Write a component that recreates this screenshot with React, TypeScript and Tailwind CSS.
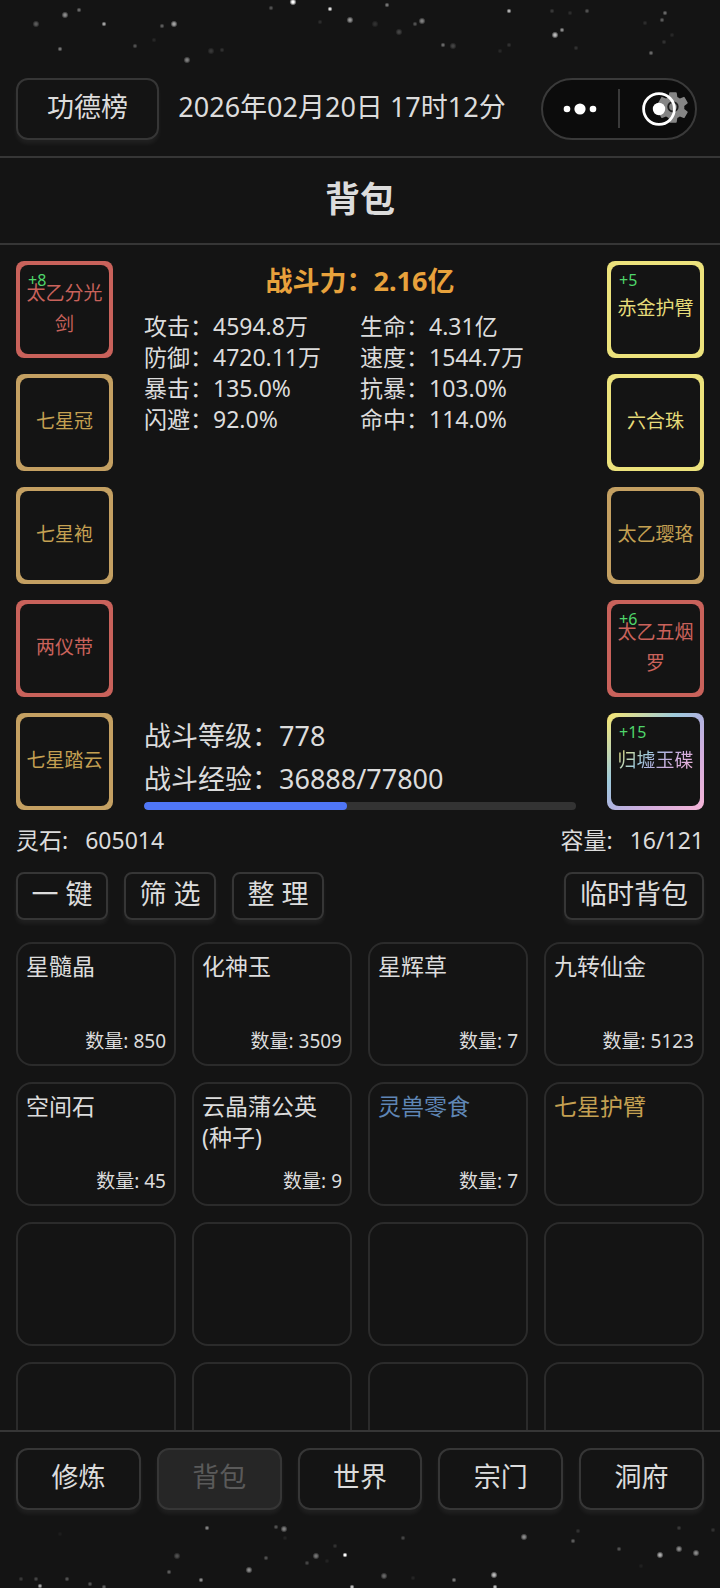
type Quality = 'gold' | 'red' | 'yellow' | 'rainbow'

type Equip = { name: string; quality: Quality; level?: number }

type Item = { name: string; count?: number; color?: string }

const frameClass: Record<Quality, string> = {
  gold: 'bg-[#c4a062]',
  red: 'bg-[#c9625b]',
  yellow: 'bg-[#ece27c]',
  rainbow: 'bg-[linear-gradient(135deg,#f8e670,#9fcbdc_36%,#b0b4e0_50%,#d3aede_70%,#f5b4d6)]'
}

const nameClass: Record<Quality, string> = {
  gold: 'text-[#c4a052]',
  red: 'text-[#c9625b]',
  yellow: 'text-[#e6dc7a]',
  rainbow:
    'bg-[linear-gradient(135deg,#f8e670,#9fcbdc_36%,#b0b4e0_50%,#d3aede_70%,#f5b4d6)] bg-clip-text text-transparent'
}

const leftEquips: Equip[] = [
  { name: '太乙分光剑', quality: 'red', level: 8 },
  { name: '七星冠', quality: 'gold' },
  { name: '七星袍', quality: 'gold' },
  { name: '两仪带', quality: 'red' },
  { name: '七星踏云', quality: 'gold' }
]

const rightEquips: Equip[] = [
  { name: '赤金护臂', quality: 'yellow', level: 5 },
  { name: '六合珠', quality: 'yellow' },
  { name: '太乙璎珞', quality: 'gold' },
  { name: '太乙五烟罗', quality: 'red', level: 6 },
  { name: '归墟玉碟', quality: 'rainbow', level: 15 }
]

const stats = [
  ['攻击', '4594.8万'],
  ['生命', '4.31亿'],
  ['防御', '4720.11万'],
  ['速度', '1544.7万'],
  ['暴击', '135.0%'],
  ['抗暴', '103.0%'],
  ['闪避', '92.0%'],
  ['命中', '114.0%']
]

const items: Item[] = [
  { name: '星髓晶', count: 850 },
  { name: '化神玉', count: 3509 },
  { name: '星辉草', count: 7 },
  { name: '九转仙金', count: 5123 },
  { name: '空间石', count: 45 },
  { name: '云晶蒲公英(种子)', count: 9 },
  { name: '灵兽零食', count: 7, color: 'text-[#5f86b5]' },
  { name: '七星护臂', color: 'text-[#c4a052]' }
]

const EMPTY_SLOTS = 12

const tabs = ['修炼', '背包', '世界', '宗门', '洞府']

const exp = { current: 36888, max: 77800 }

// x, y, radius, opacity
const topStars = [
  [36, 24, 3, 0.3], [65, 15, 3, 0.5], [79, 10, 2, 0.35], [60, 49, 2, 0.4], [104, 24, 2, 0.6],
  [135, 46, 2, 0.25], [154, 40, 2, 0.08], [162, 26, 2, 0.3], [174, 24, 3, 0.6], [187, 60, 3, 0.45],
  [211, 51, 3, 0.15], [222, 50, 2, 0.12], [271, 8, 2, 0.25], [293, 2, 3, 1], [330, 9, 2, 0.85],
  [320, 22, 2, 0.1], [350, 20, 3, 0.55], [375, 24, 3, 0.12], [387, 5, 2, 0.4], [399, 32, 3, 0.2],
  [415, 24, 2, 0.25], [422, 21, 3, 0.45], [443, 45, 2, 0.35], [453, 46, 3, 0.2], [509, 11, 2, 0.65],
  [509, 45, 2, 0.12], [500, 51, 2, 0.08], [552, 11, 2, 0.15], [555, 35, 3, 0.7], [562, 30, 2, 0.5],
  [570, 13, 2, 0.1], [587, 11, 2, 0.25], [576, 48, 2, 0.12], [645, 23, 2, 0.1], [651, 53, 2, 0.35],
  [662, 20, 2, 0.3], [665, 13, 2, 0.35], [664, 42, 2, 0.12], [672, 35, 2, 0.08]
]

const bottomStars = [
  [21, 69, 2, 0.15], [36, 69, 2, 0.2], [40, 76, 2, 0.6], [67, 69, 2, 0.25], [90, 74, 2, 0.25],
  [104, 77, 2, 0.3], [60, 24, 2, 0.04], [169, 62, 2, 0.3], [177, 46, 3, 0.25], [207, 18, 2, 0.45],
  [201, 70, 2, 0.5], [249, 60, 3, 0.5], [266, 48, 2, 0.25], [276, 17, 2, 0.25], [284, 19, 3, 0.45],
  [285, 28, 2, 0.06], [307, 53, 2, 0.2], [316, 46, 3, 0.4], [327, 51, 2, 0.06], [335, 36, 2, 0.12],
  [345, 45, 2, 1], [352, 77, 2, 0.7], [384, 66, 3, 0.35], [403, 28, 2, 0.2], [413, 68, 2, 0.07],
  [454, 70, 2, 0.4], [494, 65, 3, 0.7], [495, 77, 2, 0.7], [524, 27, 3, 0.5], [573, 31, 2, 0.3],
  [578, 21, 2, 0.12], [619, 39, 2, 0.25], [660, 45, 3, 0.65], [679, 39, 3, 0.5], [679, 18, 2, 0.15],
  [696, 43, 3, 0.5], [713, 20, 2, 0.12], [641, 56, 2, 0.05]
]

function Stars({ stars, className }: { stars: number[][]; className: string }) {
  return (
    <svg
      className={`pointer-events-none absolute inset-x-0 h-[78px] w-full ${className}`}
      viewBox="0 0 720 78"
      aria-hidden="true"
    >
      <defs>
        <radialGradient id={`star-${stars.length}`}>
          <stop offset="30%" stopColor="#fff" />
          <stop offset="100%" stopColor="#fff" stopOpacity="0" />
        </radialGradient>
      </defs>
      {stars.map(([x, y, r, opacity]) => (
        <circle key={`${x}-${y}`} cx={x} cy={y} r={r + 0.6} opacity={opacity} fill={`url(#star-${stars.length})`} />
      ))}
    </svg>
  )
}

function EquipSlot({ equip }: { equip: Equip }) {
  return (
    <button type="button" className={`relative block size-[97px] rounded-lg p-1 ${frameClass[equip.quality]}`}>
      <span className="flex size-full items-center justify-center rounded-lg bg-[#141414] px-1 pb-[2px] text-[19px] leading-[31px]">
        <span className={nameClass[equip.quality]}>{equip.name}</span>
      </span>
      {equip.level && (
        <span className="absolute top-[7px] left-3 text-base leading-6 text-[#4fd66b]">+{equip.level}</span>
      )}
    </button>
  )
}

function Capsule() {
  return (
    <div className="relative h-[62px] w-[156px]">
      <svg className="size-full" viewBox="0 0 156 62" fill="none">
        <rect x="1" y="1" width="154" height="60" rx="30" fill="#0c0c0c" stroke="#3a3a3a" strokeWidth="2" />
        <path d="M78 11v39" stroke="#3a3a3a" strokeWidth="2" />
        <g fill="#fff">
          <circle cx="26" cy="31" r="3.3" />
          <circle cx="39" cy="31" r="5.6" />
          <circle cx="52" cy="31" r="3.3" />
        </g>
        <g transform="translate(113 10.5) scale(1.58)">
          <path
            fill="#858585"
            d="M19.14 12.94c.04-.3.06-.61.06-.94 0-.32-.02-.64-.07-.94l2.03-1.58a.49.49 0 0 0 .12-.61l-1.92-3.32a.488.488 0 0 0-.59-.22l-2.39.96c-.5-.38-1.03-.7-1.62-.94l-.36-2.54a.484.484 0 0 0-.48-.41h-3.84c-.24 0-.43.17-.47.41l-.36 2.54c-.59.24-1.13.57-1.62.94l-2.39-.96c-.22-.08-.47 0-.59.22L2.74 8.87c-.12.21-.08.47.12.61l2.03 1.58c-.05.3-.09.63-.09.94s.02.64.07.94l-2.03 1.58a.49.49 0 0 0-.12.61l1.92 3.32c.12.22.37.29.59.22l2.39-.96c.5.38 1.03.7 1.62.94l.36 2.54c.05.24.24.41.48.41h3.84c.24 0 .44-.17.47-.41l.36-2.54c.59-.24 1.13-.56 1.62-.94l2.39.96c.22.08.47 0 .59-.22l1.92-3.32c.12-.22.07-.47-.12-.61l-2.01-1.58z"
          />
          <circle cx="12" cy="11.6" r="3" stroke="#1c1c1c" strokeWidth="1.2" />
        </g>
        <circle cx="118" cy="31" r="15.4" stroke="#fff" strokeWidth="2.8" />
        <circle cx="118" cy="31" r="6.2" fill="#fff" />
      </svg>
      <button type="button" aria-label="更多" className="absolute inset-y-0 left-0 w-1/2" />
      <button type="button" aria-label="关闭" className="absolute inset-y-0 right-0 w-1/2" />
    </div>
  )
}

const buttonClass = 'border-2 border-[#363636] shadow-[0_4px_4px_rgba(255,255,255,0.05)]'

export default function App() {
  return (
    <div className="relative flex h-screen flex-col bg-[#141414] font-['Noto_Sans','Noto_Sans_CJK_SC',sans-serif] text-[27px] leading-10 text-[#dcdcdc]">
      <Stars stars={topStars} className="top-0" />
      <Stars stars={bottomStars} className="bottom-0" />

      <header className="border-b-2 border-[#363636] px-4 pt-[78px] pb-4">
        <div className="flex items-center justify-between">
          <button type="button" className={`h-[62px] rounded-xl px-[29px] pb-1 ${buttonClass}`}>
            功德榜
          </button>
          <time className="pb-1 whitespace-nowrap">2026年02月20日 17时12分</time>
          <div className="ml-4 pr-[7px]">
            <Capsule />
          </div>
        </div>
      </header>

      <h1 className="border-b-2 border-[#363636] pt-[17px] pb-5 text-center text-[35px] leading-12 font-bold">背包</h1>

      <main className="flex min-h-0 flex-1 flex-col px-4 pt-4">
        <section className="flex gap-[31px]">
          <div className="flex flex-col gap-4">
            {leftEquips.map(equip => (
              <EquipSlot key={equip.name} equip={equip} />
            ))}
          </div>

          <div className="flex flex-1 flex-col">
            <h2 className="text-center font-bold text-[#e8a23c]">战斗力：2.16亿</h2>
            <dl className="mt-[10px] grid grid-cols-2 text-[23px] leading-[31px]">
              {stats.map(([label, value]) => (
                <div key={label} className="flex whitespace-nowrap">
                  <dt>{label}：</dt>
                  <dd>{value}</dd>
                </div>
              ))}
            </dl>
            <div className="mt-auto mb-[2px] leading-[43px]">
              <p>战斗等级：778</p>
              <p>战斗经验：{exp.current}/{exp.max}</p>
            </div>
            <div className="h-2 overflow-hidden rounded bg-[#333]">
              <div
                className="h-full rounded bg-[#4f76f6]"
                style={{ width: `${Math.floor((exp.current / exp.max) * 100)}%` }}
              />
            </div>
          </div>

          <div className="flex flex-col gap-4">
            {rightEquips.map(equip => (
              <EquipSlot key={equip.name} equip={equip} />
            ))}
          </div>
        </section>

        <div className="mt-[15px] flex justify-between text-[23px] leading-[31px]">
          <p>灵石:<span className="ml-[17px]">605014</span></p>
          <p>容量:<span className="ml-[17px]">16/121</span></p>
        </div>

        <div className="mt-4 flex gap-4">
          {['一 键', '筛 选', '整 理'].map(label => (
            <button key={label} type="button" className={`h-12 min-w-[92px] rounded-lg pb-1 ${buttonClass}`}>
              {label}
            </button>
          ))}
          <button type="button" className={`ml-auto h-12 rounded-lg px-[14px] pb-1 ${buttonClass}`}>
            临时背包
          </button>
        </div>

        {/* Bag */}
        <ul className="mt-[22px] grid min-h-0 flex-1 auto-rows-[124px] grid-cols-4 gap-4 overflow-y-auto [scrollbar-width:none]">
          {items.map(item => (
            <li
              key={item.name}
              className="flex flex-col justify-between rounded-2xl border-2 border-[#2b2b2b] px-2 py-[7px] text-[23px] leading-[31px]"
            >
              <span className={item.color}>{item.name}</span>
              {item.count && <span className="text-right text-[19px]">数量: {item.count}</span>}
            </li>
          ))}
          {Array.from({ length: EMPTY_SLOTS }, (_, i) => (
            <li key={i} className="rounded-2xl border-2 border-[#2b2b2b]" />
          ))}
        </ul>
      </main>

      <nav className="flex gap-4 border-t-2 border-[#363636] px-4 pt-4 pb-[78px]">
        {tabs.map(tab => (
          <button
            key={tab}
            type="button"
            disabled={tab === '背包'}
            className={`h-[62px] flex-1 rounded-xl pb-1 disabled:bg-[#262626] disabled:text-[#5a5a5a] ${buttonClass}`}
          >
            {tab}
          </button>
        ))}
      </nav>
    </div>
  )
}
